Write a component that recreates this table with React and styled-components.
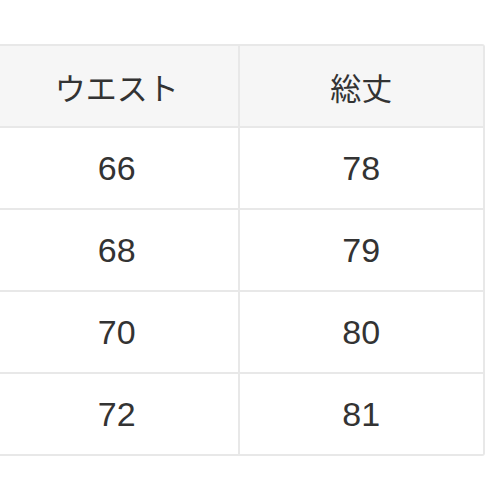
import React from 'react';
import styled, { createGlobalStyle } from 'styled-components';

const GlobalStyle = createGlobalStyle`
    body {
        margin: 0;
        background: #ffffff;
        font-family: "Liberation Sans", "Noto Sans CJK JP", sans-serif;
        overflow: hidden;
    }
`;

const Page = styled.div`
    width: 486px;
    height: 486px;
    padding-top: 44px;
    box-sizing: border-box;
    overflow: hidden;
`;

const Table = styled.table`
    margin-left: -6px;
    width: 491px;
    border-collapse: separate;
    border-spacing: 0;
    border: 2px solid #e8e8e8;
    border-radius: 3px;
    table-layout: fixed;
`;

const Cell = styled.td`
    height: 80px;
    padding: 0;
    text-align: center;
    vertical-align: middle;
    font-family: ${(p) => (p.$head ? '"Noto Sans CJK JP", sans-serif' : '"Liberation Sans", "Noto Sans CJK JP", sans-serif')};
    font-size: ${(p) => (p.$head ? '31px' : '34px')};
    color: #333333;
    background: ${(p) => (p.$head ? '#f6f6f6' : '#ffffff')};
    border-bottom: ${(p) => (p.$last ? 'none' : '2px solid #e8e8e8')};
    border-right: ${(p) => (p.$right ? 'none' : '2px solid #e8e8e8')};
    font-weight: 400;
`;

const rows = [
    ['66', '78'],
    ['68', '79'],
    ['70', '80'],
    ['72', '81'],
];

function SizeTable() {
    return (
        <Table>
            <tbody>
                <tr>
                    <Cell as="th" $head>ウエスト</Cell>
                    <Cell as="th" $head $right>総丈</Cell>
                </tr>
                {rows.map((r, i) => (
                    <tr key={r[0]}>
                        <Cell $last={i === rows.length - 1}>{r[0]}</Cell>
                        <Cell $right $last={i === rows.length - 1}>{r[1]}</Cell>
                    </tr>
                ))}
            </tbody>
        </Table>
    );
}

export default function App() {
    return (
        <Page>
            <GlobalStyle />
            <SizeTable />
        </Page>
    );
}
